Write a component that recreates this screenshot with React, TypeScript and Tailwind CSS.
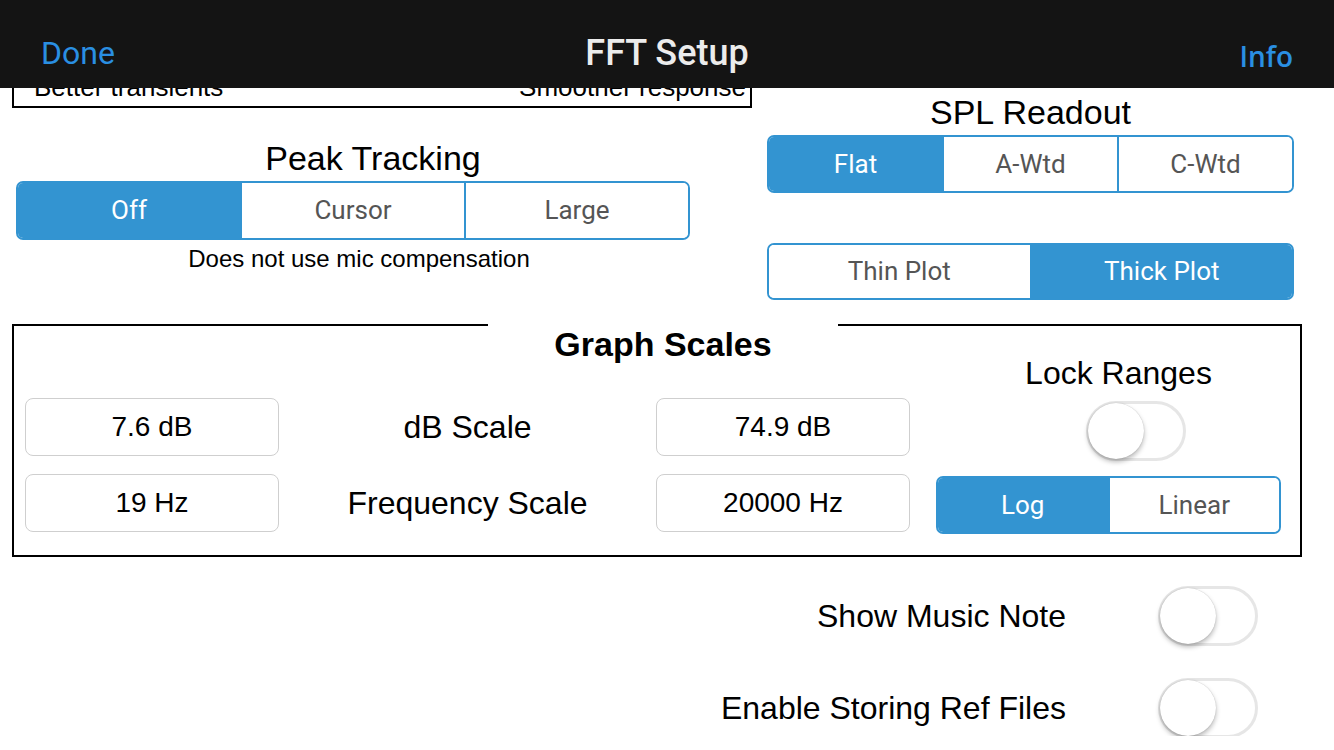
import React from "react";

type SegmentedProps = {
  options: string[];
  selected: number;
  className?: string;
};

function Segmented({ options, selected, className = "" }: SegmentedProps) {
  return (
    <div
      className={`flex overflow-hidden rounded-[7px] border-2 border-[#3394d1] font-['Roboto',sans-serif] text-[26px] ${className}`}
    >
      {options.map((label, i) => (
        <div
          key={label}
          className={`flex flex-1 items-center justify-center ${
            i > 0 ? "border-l-2 border-[#3394d1]" : ""
          } ${i === selected ? "bg-[#3394d1] text-white" : "bg-white text-[#555555]"}`}
        >
          {label}
        </div>
      ))}
    </div>
  );
}

function Toggle() {
  return (
    <div className="relative h-[60px] w-[100px] rounded-full border-[3px] border-[#e6e6e6] bg-white">
      <div className="absolute left-[-1px] top-[-1px] h-[56px] w-[56px] rounded-full bg-white shadow-[0_3px_5px_rgba(0,0,0,0.28),0_0_1px_rgba(0,0,0,0.25)]" />
    </div>
  );
}

function ValueBox({ value }: { value: string }) {
  return (
    <div className="flex h-[58px] w-[254px] items-center justify-center rounded-[8px] border border-[#cfcfcf] text-[28px] text-black">
      {value}
    </div>
  );
}

export default function App() {
  return (
    <div className="relative h-[750px] w-[1334px] overflow-hidden bg-white font-['Liberation_Sans',Arial,sans-serif] text-black">
      {/* navigation bar sits over the scrolled content */}
      <header className="absolute inset-x-0 top-0 z-10 grid h-[88px] grid-cols-3 items-center bg-[#141414] px-[41px] pt-[18px] font-['Roboto',sans-serif]">
        <span className="justify-self-start text-[32px] text-[#2a8fe2]">Done</span>
        <span className="justify-self-center text-[36px] font-medium text-[#ececec]">FFT Setup</span>
        <span className="justify-self-end pt-[6px] font-['Open_Sans',sans-serif] text-[28px] font-semibold text-[#2a8fe2]">
          Info
        </span>
      </header>

      <div className="h-[736px] overflow-hidden">
        <div className="flex items-start pt-[40px]">
          {/* left column */}
          <div className="ml-[12px] w-[740px]">
            <div className="flex h-[68px] items-end justify-between border-2 border-black pb-[4px] pl-[20px] pr-[4px] text-[26px] leading-[30px]">
              <span>Better transients</span>
              <span>Smoother response</span>
            </div>
            <div className="ml-[4px] mt-[32px] w-[674px] pl-[40px] text-center text-[34px] leading-[36px]">
              Peak Tracking
            </div>
            <Segmented
              options={["Off", "Cursor", "Large"]}
              selected={0}
              className="ml-[4px] mt-[5px] h-[59px] w-[674px]"
            />
            <div className="ml-[4px] mt-[5px] w-[674px] pl-[12px] text-center text-[24px] leading-[28px]">
              Does not use mic compensation
            </div>
          </div>

          {/* right column */}
          <div className="ml-[15px] w-[527px] pt-[54px]">
            <div className="text-center text-[34px] leading-[36px]">SPL Readout</div>
            <Segmented options={["Flat", "A-Wtd", "C-Wtd"]} selected={0} className="mt-[5px] h-[58px]" />
            <Segmented options={["Thin Plot", "Thick Plot"]} selected={1} className="mt-[50px] h-[57px]" />
          </div>
        </div>

        {/* graph scales */}
        <div className="relative ml-[12px] mt-[24px] h-[233px] w-[1290px] border-2 border-black">
          <span className="absolute left-[474px] top-[-2px] h-[2px] w-[350px] bg-white" />
          <div className="pl-[12px] text-center text-[34px] font-bold leading-[36px]">Graph Scales</div>
          <div className="flex items-start">
            <div className="flex flex-col gap-[18px] pl-[11px] pt-[36px]">
              <div className="flex items-center">
                <ValueBox value="7.6 dB" />
                <div className="w-[377px] text-center text-[32px]">dB Scale</div>
                <ValueBox value="74.9 dB" />
              </div>
              <div className="flex items-center">
                <ValueBox value="19 Hz" />
                <div className="w-[377px] text-center text-[32px]">Frequency Scale</div>
                <ValueBox value="20000 Hz" />
              </div>
            </div>
            <div className="ml-[26px] mt-[-7px] flex w-[345px] flex-col items-center">
              <div className="pl-[20px] text-[32px] leading-[36px]">Lock Ranges</div>
              <div className="mt-[10px] pl-[55px]">
                <Toggle />
              </div>
              <Segmented options={["Log", "Linear"]} selected={0} className="mt-[15px] h-[58px] w-[345px]" />
            </div>
          </div>
        </div>

        <div className="mt-[29px] flex flex-col gap-[32px] pr-[76px]">
          <div className="flex h-[60px] items-center justify-end gap-[92px]">
            <span className="text-[32px]">Show Music Note</span>
            <Toggle />
          </div>
          <div className="flex h-[60px] items-center justify-end gap-[92px]">
            <span className="text-[32px]">Enable Storing Ref Files</span>
            <Toggle />
          </div>
        </div>
      </div>
    </div>
  );
}
